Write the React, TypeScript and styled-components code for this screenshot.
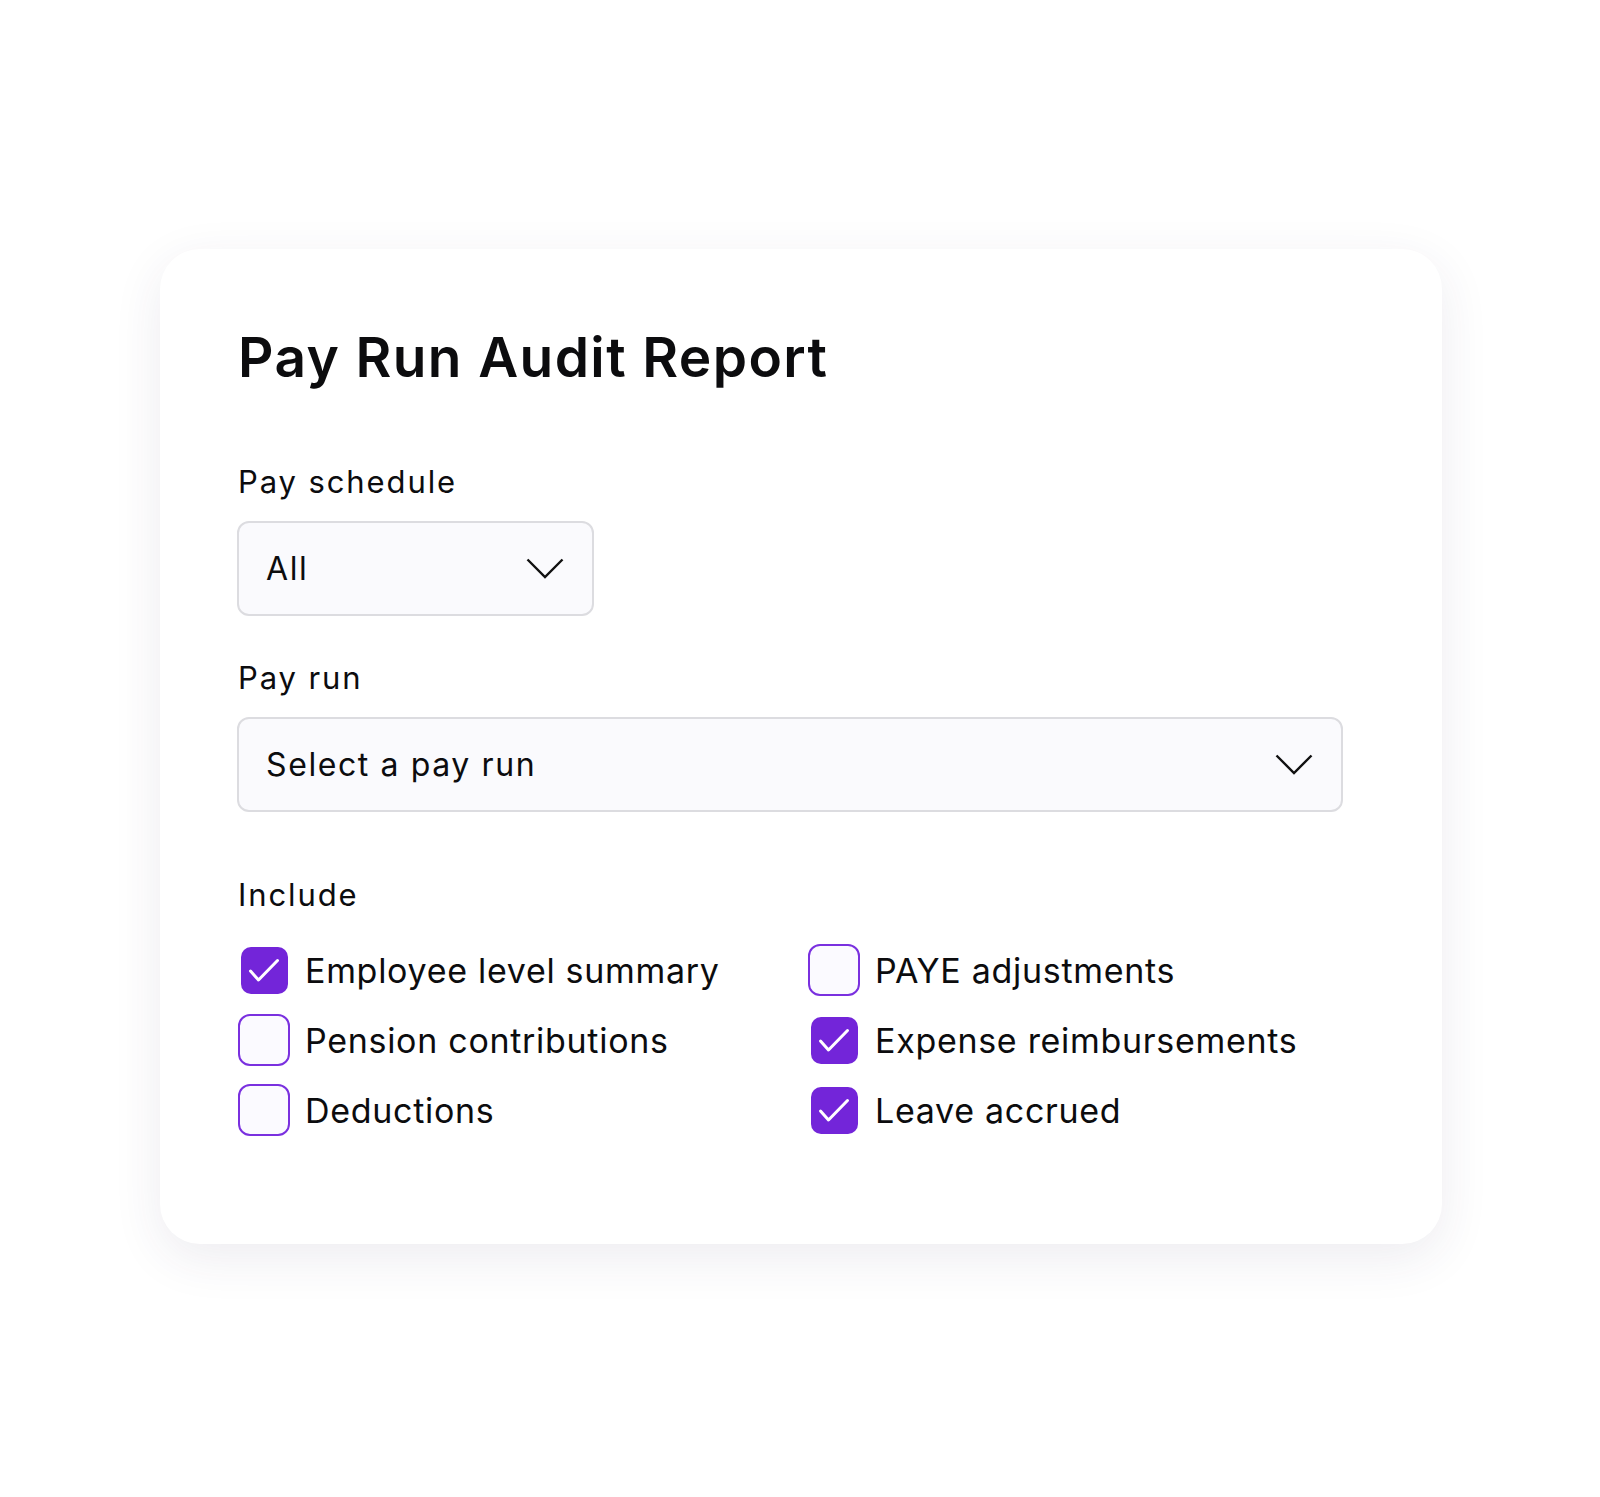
import styled, { createGlobalStyle } from "styled-components";

const GlobalStyle = createGlobalStyle`
  html, body {
    margin: 0;
    padding: 0;
    background: #ffffff;
  }

  body {
    font-family: Inter, "Noto Sans", sans-serif;
    color: #0c0c0e;
  }
`;

const Page = styled.div`
  width: 1600px;
  height: 1497px;
  box-sizing: border-box;
  padding: 249px 0 0 160px;
`;

const Card = styled.div`
  width: 1282px;
  height: 995px;
  box-sizing: border-box;
  padding: 74px 99px 0 77px;
  background: #ffffff;
  border-radius: 40px;
  box-shadow: 0 14px 50px rgba(50, 40, 90, 0.09);
  display: flex;
  flex-direction: column;
`;

const Title = styled.h1`
  margin: 0;
  font-size: 55px;
  line-height: 68px;
  font-weight: 600;
  letter-spacing: 1.4px;
  padding-left: 1px;
`;

const Label = styled.div<{ $gap: number }>`
  margin-top: ${(p) => p.$gap}px;
  font-size: 31px;
  line-height: 40px;
  font-weight: 400;
  letter-spacing: 1.9px;
  padding-left: 1px;
`;

const Select = styled.div<{ $width?: number }>`
  margin-top: 19px;
  width: ${(p) => (p.$width ? `${p.$width}px` : "100%")};
  height: 95px;
  box-sizing: border-box;
  border: 2px solid #dcdce0;
  border-radius: 12px;
  background: #fafafd;
  display: flex;
  align-items: center;
  justify-content: space-between;
  padding: 0 28px 0 27px;
  font-size: 32px;
  letter-spacing: 1.6px;
`;

const Chevron = () => (
  <svg width="38" height="21" viewBox="0 0 38 21" fill="none">
    <path d="M1.5 1.5 L19 19 L36.5 1.5" stroke="#111" strokeWidth="2.4" strokeLinejoin="miter" />
  </svg>
);

const Options = styled.div`
  margin-top: 27px;
  display: grid;
  grid-template-columns: 570px 1fr;
  row-gap: 14px;
  padding-left: 1px;
`;

const Option = styled.label`
  display: flex;
  align-items: center;
  height: 56px;
  gap: 15px;
  font-size: 34px;
  letter-spacing: 0.7px;
  cursor: pointer;
`;

const BoxSlot = styled.span`
  width: 52px;
  height: 52px;
  display: flex;
  align-items: center;
  justify-content: center;
  flex-shrink: 0;
`;

const Box = styled.span<{ $checked: boolean }>`
  box-sizing: border-box;
  width: ${(p) => (p.$checked ? 47 : 52)}px;
  height: ${(p) => (p.$checked ? 47 : 52)}px;
  border-radius: ${(p) => (p.$checked ? 10 : 12)}px;
  background: ${(p) => (p.$checked ? "#7325d9" : "#fbfaff")};
  border: ${(p) => (p.$checked ? "none" : "2.5px solid #7a30df")};
  display: flex;
  align-items: center;
  justify-content: center;
`;

const Tick = () => (
  <svg width="47" height="47" viewBox="0 0 47 47" fill="none">
    <path d="M9.5 24 L17.5 33 L36.5 13.5" stroke="#fff" strokeWidth="3" strokeLinecap="round" strokeLinejoin="round" />
  </svg>
);

const options = [
  { label: "Employee level summary", checked: true },
  { label: "PAYE adjustments", checked: false },
  { label: "Pension contributions", checked: false },
  { label: "Expense reimbursements", checked: true },
  { label: "Deductions", checked: false },
  { label: "Leave accrued", checked: true },
];

const App = () => {
  return (
    <>
      <GlobalStyle />
      <Page>
        <Card>
          <Title>Pay Run Audit Report</Title>

          <Label $gap={71}>Pay schedule</Label>
          <Select $width={357}>
            <span>All</span>
            <Chevron />
          </Select>

          <Label $gap={42}>Pay run</Label>
          <Select>
            <span>Select a pay run</span>
            <Chevron />
          </Select>

          <Label $gap={63}>Include</Label>
          <Options>
            {options.map((o) => (
              <Option key={o.label}>
                <BoxSlot>
                  <Box $checked={o.checked}>{o.checked && <Tick />}</Box>
                </BoxSlot>
                <span>{o.label}</span>
              </Option>
            ))}
          </Options>
        </Card>
      </Page>
    </>
  );
};

export default App;
